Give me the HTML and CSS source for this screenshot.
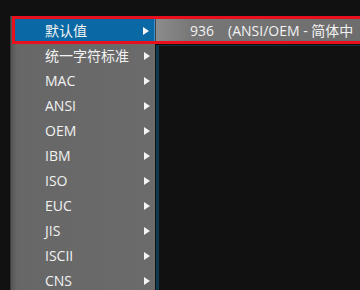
FILE: index.html
```html
<!DOCTYPE html>
<html lang="zh-CN">
<head>
    <meta charset="UTF-8">
    <title>编码菜单</title>
    <link rel="stylesheet" href="styles.css">
</head>
<body>
    <div class="screen">
        <!-- 编码菜单 -->
        <div class="menu">
            <div class="menu-item selected"><span>默认值</span><i class="arrow"></i></div>
            <div class="menu-item"><span>统一字符标准</span><i class="arrow"></i></div>
            <div class="menu-item"><span>MAC</span><i class="arrow"></i></div>
            <div class="menu-item"><span>ANSI</span><i class="arrow"></i></div>
            <div class="menu-item"><span>OEM</span><i class="arrow"></i></div>
            <div class="menu-item"><span>IBM</span><i class="arrow"></i></div>
            <div class="menu-item"><span>ISO</span><i class="arrow"></i></div>
            <div class="menu-item"><span>EUC</span><i class="arrow"></i></div>
            <div class="menu-item"><span>JIS</span><i class="arrow"></i></div>
            <div class="menu-item"><span>ISCII</span><i class="arrow"></i></div>
            <div class="menu-item"><span>CNS</span><i class="arrow"></i></div>
        </div>

        <!-- 子菜单 + 后面的窗口 -->
        <div class="side">
            <div class="submenu"><span class="code">936</span><span class="desc">(ANSI/OEM - 简体中</span></div>
            <div class="pane"></div>
        </div>

        <div class="highlight"></div>
    </div>
</body>
</html>
```

FILE: styles.css
```css
* {
    margin: 0;
    padding: 0;
    box-sizing: border-box;
}

html, body {
    width: 360px;
    height: 290px;
    overflow: hidden;
    background: #111;
    font-family: 'Open Sans', 'Noto Sans CJK SC', sans-serif;
    font-size: 14px;
    color: #f2f2f2;
}

.screen {
    position: relative;
    display: flex;
    height: 290px;
    padding: 16px 0 0 10px;
    overflow: hidden;
}

.menu {
    width: 145px;
    flex-shrink: 0;
    padding-top: 2px;
    border-left: 1px solid #3a3a3a;
    background: linear-gradient(to right, #555 0, #676767 6px, #6b6b6b 100%);
}

.menu-item {
    display: flex;
    align-items: center;
    justify-content: space-between;
    height: 25px;
    margin-left: 2px;
    padding: 0 5px 0 32px;
    line-height: 1;
}

.menu-item.selected {
    background: #0a69a4;
    border-right: 1px solid #3a8fcc;
}

.arrow {
    width: 0;
    height: 0;
    border-left: 6px solid #f4f4f4;
    border-top: 4px solid transparent;
    border-bottom: 4px solid transparent;
}

.side {
    flex: 1;
    display: flex;
    flex-direction: column;
    padding-top: 3px;
    min-width: 0;
}

.submenu {
    height: 22px;
    display: flex;
    align-items: center;
    white-space: nowrap;
    overflow: hidden;
    padding-left: 34px;
    border-left: 1px solid #444;
    background: linear-gradient(to right, #8c8c8c 0, #777 35px, #6d6d6d 100%);
}

.submenu .code {
    margin-right: 14px;
}

.pane {
    flex: 1;
    margin-top: 4px;
    margin-left: 1px;
    border-left: 3px solid #0c3850;
    border-top: 1px solid #16303e;
    background: #111;
}

.highlight {
    position: absolute;
    top: 16px;
    left: 12px;
    width: 352px;
    height: 28px;
    border: 3px solid #e8101c;
}
```
